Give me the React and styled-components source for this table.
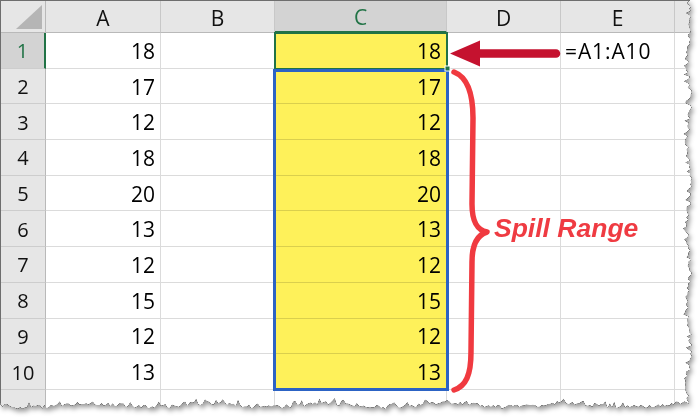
import styled, { createGlobalStyle } from "styled-components";

const GREEN = "#217346";
const BLUE = "#2c63c4";
const YELLOW = "#fef15a";
const COLS = ["A", "B", "C", "D", "E", ""];
const VALUES = [18, 17, 12, 18, 20, 13, 12, 15, 12, 13];

// torn paper edge along the right and bottom sides
let seed = 17;
const rnd = () => {
  seed = (seed * 9301 + 49297) % 233280;
  return seed / 233280;
};
const tornEdge = (() => {
  const pts = ["0px 0px", "690px 0px"];
  for (let y = 2; y < 404; y += 2.2) {
    const x = 688.5 + Math.sin(y / 13) * 1.8 + (rnd() - 0.5) * 4 - (rnd() > 0.88 ? 3 : 0);
    pts.push(`${x.toFixed(1)}px ${y.toFixed(1)}px`);
  }
  for (let x = 689; x > 0; x -= 2.2) {
    const y = 405 + Math.sin(x / 19) * 2 + (rnd() - 0.5) * 4 - (rnd() > 0.86 ? 3.5 : 0);
    pts.push(`${x.toFixed(1)}px ${y.toFixed(1)}px`);
  }
  pts.push("0px 405px");
  return `polygon(${pts.join(",")})`;
})();

const GlobalStyle = createGlobalStyle`
  html, body {
    margin: 0;
    padding: 0;
    background: #ffffff;
  }
`;

const Paper = styled.div`
  width: 700px;
  height: 418px;
  filter: drop-shadow(0 0 0.7px rgba(0, 0, 0, 1)) drop-shadow(0 0 0.4px rgba(0, 0, 0, 0.9))
    drop-shadow(2px 3px 2.5px rgba(0, 0, 0, 0.4));
`;

const Sheet = styled.div`
  width: 692px;
  height: 412px;
  box-sizing: border-box;
  border-top: 1px solid #6e6e6e;
  border-left: 1px solid #6e6e6e;
  background: #ffffff;
  clip-path: ${(p) => p.$clip};
  display: grid;
  grid-template-columns: 45px 115px 114px 172px 114px 114px 1fr;
  grid-template-rows: 32px repeat(10, 35.7px) 1fr;
  font-family: "Open Sans", "Noto Sans", sans-serif;
  color: #000000;
`;

const Cell = styled.div`
  grid-row: ${(p) => p.$r};
  grid-column: ${(p) => p.$c};
  box-sizing: border-box;
  border-right: 1px solid rgba(0, 0, 0, 0.14);
  border-bottom: 1px solid rgba(0, 0, 0, 0.14);
  background: ${(p) => (p.$fill ? YELLOW : "#ffffff")};
  display: flex;
  align-items: center;
  justify-content: ${(p) => (p.$left ? "flex-start" : "flex-end")};
  padding: ${(p) => (p.$left ? "1px 0 0 4px" : "1px 5px 0 0")};
  font-size: 21px;
  letter-spacing: ${(p) => (p.$left ? "0.9px" : "0")};
  white-space: nowrap;
`;

const ColHead = styled.div`
  grid-row: 1;
  grid-column: ${(p) => p.$c};
  box-sizing: border-box;
  background: ${(p) => (p.$active ? "#d3d3d3" : "#e6e6e6")};
  color: ${(p) => (p.$active ? GREEN : "#111111")};
  border-right: 1px solid #c8c8c8;
  border-bottom: ${(p) => (p.$active ? `2px solid ${GREEN}` : "1px solid #b9b9b9")};
  display: flex;
  align-items: center;
  justify-content: center;
  padding-top: 2px;
  font-size: 21px;
`;

const Corner = styled.div`
  grid-row: 1;
  grid-column: 1;
  box-sizing: border-box;
  background: #e6e6e6;
  border-right: 1px solid #b9b9b9;
  border-bottom: 1px solid #b9b9b9;
  position: relative;

  &::after {
    content: "";
    position: absolute;
    right: 3px;
    bottom: 3px;
    width: 26px;
    height: 24px;
    background: #b5b5b5;
    clip-path: polygon(100% 0, 100% 100%, 0 100%);
  }
`;

const RowHead = styled.div`
  grid-row: ${(p) => p.$r};
  grid-column: 1;
  box-sizing: border-box;
  background: ${(p) => (p.$active ? "#d3d3d3" : "#e6e6e6")};
  color: ${(p) => (p.$active ? GREEN : "#111111")};
  border-right: ${(p) => (p.$active ? `2px solid ${GREEN}` : "1px solid #b9b9b9")};
  border-bottom: 1px solid #cdcdcd;
  display: flex;
  align-items: center;
  justify-content: center;
  padding-top: 1px;
  font-size: 20px;
`;

const Frame = styled.div`
  grid-row: ${(p) => p.$rows};
  grid-column: 4;
  z-index: 2;
  pointer-events: none;
  border: ${(p) => p.$width}px solid ${(p) => p.$color};
  margin: ${(p) => p.$margin};
`;

const Marks = styled.svg`
  grid-row: 1 / -1;
  grid-column: 1 / -1;
  width: 691px;
  height: 411px;
  z-index: 3;
  pointer-events: none;
`;

const Label = styled.div`
  grid-row: 7;
  grid-column: 5 / 8;
  z-index: 3;
  align-self: center;
  padding: 0 0 2px 47px;
  font-family: "Liberation Sans", Arial, sans-serif;
  font-weight: 700;
  font-style: italic;
  font-size: 26.5px;
  color: #ef3b42;
  white-space: nowrap;
`;

export default function App() {
  const rows = [...Array(11)].map((_, i) => i + 1);
  return (
    <>
      <GlobalStyle />
      <Paper>
        <Sheet $clip={tornEdge}>
          <Corner />
          {COLS.map((name, i) => (
            <ColHead key={i} $c={i + 2} $active={name === "C"}>
              {name}
            </ColHead>
          ))}
          {rows.map((r) => (
            <RowHead key={`h${r}`} $r={r + 1} $active={r === 1}>
              {r <= 10 ? r : ""}
            </RowHead>
          ))}
          {rows.map((r) =>
            COLS.map((name, i) => {
              const v = r <= 10 && (name === "A" || name === "C") ? VALUES[r - 1] : "";
              const isFormula = name === "E" && r === 1;
              return (
                <Cell
                  key={`${r}${i}`}
                  $r={r + 1}
                  $c={i + 2}
                  $fill={name === "C" && r <= 10}
                  $left={isFormula}
                >
                  {isFormula ? "=A1:A10" : v}
                </Cell>
              );
            })
          )}
          <Frame $rows="2" $width={2} $color={GREEN} $margin="-1px -1px -1px -1px" />
          <Frame $rows="3 / 12" $width={3} $color={BLUE} $margin="0 -2px -1px -2px" />
          <Label>Spill Range</Label>
          <Marks viewBox="1 1 691 411">
            <rect x="445" y="66" width="5" height="5" fill={GREEN} stroke="#ffffff" strokeWidth="1" />
            <line x1="478" y1="53.5" x2="556" y2="53.5" stroke="#c5122f" strokeWidth="8.5" strokeLinecap="round" />
            <polygon points="450,53.5 480,40.5 480,66.5" fill="#c5122f" />
            <path
              d="M454 72 C467 77 473 92 473 118 L472 204 C472 222 477 230 487 232 C477 235 472 245 472 262 L471 352 C471 375 466 386 454 390"
              fill="none"
              stroke="#f03a40"
              strokeWidth="5.5"
              strokeLinecap="round"
              strokeLinejoin="round"
            />
          </Marks>
        </Sheet>
      </Paper>
    </>
  );
}
